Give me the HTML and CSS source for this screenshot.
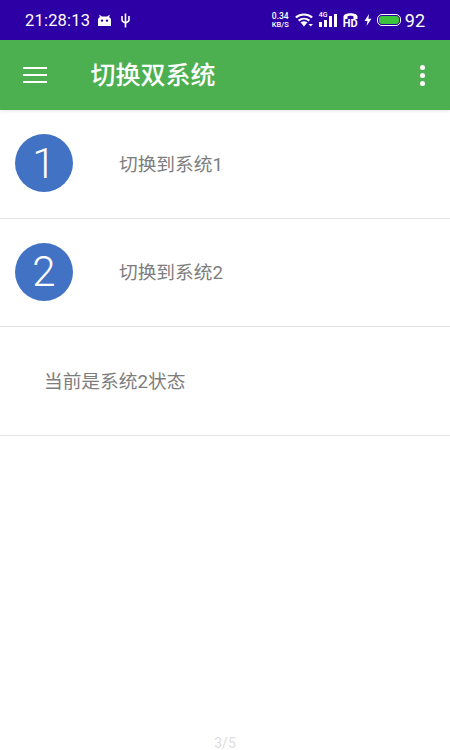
FILE: index.html
```html
<!DOCTYPE html>
<html lang="zh-CN">
<head>
    <meta charset="UTF-8">
    <meta name="viewport" content="width=device-width, initial-scale=1.0">
    <title>切换双系统</title>
    <link rel="stylesheet" href="styles.css">
</head>
<body>
    <div class="page">
        <div class="status-bar">
            <div class="status-left">
                <span class="clock">21:28:13</span>
                <svg class="icon-bot" viewBox="0 0 13 11"><path d="M1.8 0 L3.8 1.6 H9.2 L11.2 0 L12 0.8 L10.8 2 C12.2 2.6 13 3.6 13 5 V11 H0 V5 C0 3.6 0.8 2.6 2.2 2 L1 0.8 Z" fill="#fff"/><circle cx="4" cy="5.6" r="1.2" fill="#2c00a5"/><circle cx="9" cy="5.6" r="1.2" fill="#2c00a5"/></svg>
                <svg class="icon-usb" viewBox="0 0 9 15"><path d="M4.5 0.5 V14.5 M1 3 V7 C1 8.6 2.6 9.2 4.5 10 C6.4 9.2 8 8.6 8 7 V3" fill="none" stroke="#fff" stroke-width="1.6"/></svg>
            </div>
            <div class="status-right">
                <span class="net-speed"><span class="speed-value">0.34</span><span class="speed-unit">KB/S</span></span>
                <svg class="icon-wifi" viewBox="0 0 18 14"><path d="M0.8 4.5 C5.5 0.4 12.5 0.4 17.2 4.5 M3.6 7.6 C6.8 5 11.2 5 14.4 7.6" fill="none" stroke="#fff" stroke-width="2"/><path d="M5.5 9.3 C7.5 8 10.5 8 12.5 9.3 L9 13.5 Z" fill="#fff"/><path d="M13.5 11 H18 L15.7 13.5 Z" fill="#fff"/></svg>
                <span class="signal">
                    <span class="signal-label">4G</span>
                    <span class="bar bar-1"></span>
                    <span class="bar bar-2"></span>
                    <span class="bar bar-3"></span>
                    <span class="bar bar-4"></span>
                </span>
                <span class="hd-call">
                    <svg class="icon-phone" viewBox="0 0 15 6"><path d="M0.5 6 V3.5 C0.5 -1 14.5 -1 14.5 3.5 V6 H10.5 V3.8 C10.5 2.4 4.5 2.4 4.5 3.8 V6 Z" fill="#fff"/></svg>
                    <span class="hd-label">HD</span>
                </span>
                <svg class="icon-bolt" viewBox="0 0 8 12"><path d="M5 0 L0.5 7 H3.5 L2.5 12 L7.5 4.8 H4.4 Z" fill="#fff"/></svg>
                <span class="battery"><span class="battery-level"></span></span>
                <span class="battery-text">92</span>
            </div>
        </div>

        <div class="toolbar">
            <div class="menu-icon">
                <span></span>
                <span></span>
                <span></span>
            </div>
            <h1 class="title">切换双系统</h1>
            <div class="more-icon">
                <span></span>
                <span></span>
                <span></span>
            </div>
        </div>

        <div class="list">
            <div class="row">
                <div class="badge">1</div>
                <div class="row-text">切换到系统1</div>
            </div>
            <div class="row">
                <div class="badge">2</div>
                <div class="row-text">切换到系统2</div>
            </div>
            <div class="row row-state">
                <div class="row-text">当前是系统2状态</div>
            </div>
        </div>

        <div class="pager">3/5</div>
    </div>
</body>
</html>
```

FILE: styles.css
```css
* {
    box-sizing: border-box;
}
html, body {
    margin: 0;
    padding: 0;
}
body {
    font-family: "Roboto", "Noto Sans CJK SC", sans-serif;
    background: #fff;
}
.page {
    width: 450px;
    height: 750px;
    display: flex;
    flex-direction: column;
    overflow: hidden;
}
.status-bar {
    height: 40px;
    background: #2c00a5;
    color: #fff;
    display: flex;
    align-items: center;
    justify-content: space-between;
    padding: 0 25px 0 25px;
}
.status-left {
    display: flex;
    align-items: center;
}
.clock {
    font-size: 16.5px;
    letter-spacing: 0.2px;
}
.icon-bot {
    width: 13px;
    height: 11px;
    margin-left: 8px;
}
.icon-usb {
    width: 9px;
    height: 15px;
    margin-left: 10px;
}
.status-right {
    display: flex;
    align-items: center;
}
.net-speed {
    display: flex;
    flex-direction: column;
    align-items: center;
    width: 17px;
    font-weight: 500;
}
.speed-value {
    font-size: 8.5px;
    line-height: 9px;
}
.speed-unit {
    font-size: 7.5px;
    line-height: 8px;
}
.icon-wifi {
    width: 18px;
    height: 14px;
    margin-left: 6px;
}
.signal {
    position: relative;
    display: flex;
    align-items: flex-end;
    gap: 2px;
    height: 14px;
    margin-left: 6px;
}
.signal-label {
    position: absolute;
    left: 0;
    top: -1px;
    font-size: 7px;
    line-height: 7px;
    font-weight: 500;
}
.bar {
    width: 3px;
    background: #fff;
}
.bar-1 { height: 5px; }
.bar-2 { height: 7px; }
.bar-3 { height: 11px; }
.bar-4 { height: 13px; }
.hd-call {
    display: flex;
    flex-direction: column;
    align-items: center;
    width: 15px;
    margin-left: 6px;
}
.icon-phone {
    width: 15px;
    height: 6px;
}
.hd-label {
    font-size: 11px;
    line-height: 9px;
    font-weight: 700;
}
.icon-bolt {
    width: 8px;
    height: 12px;
    margin-left: 6px;
}
.battery {
    width: 24px;
    height: 12px;
    margin-left: 5px;
    padding: 1px;
    border: 1px solid #fff;
    border-radius: 5px;
}
.battery-level {
    display: block;
    height: 100%;
    background: #3cc43c;
    border-radius: 3px;
}
.battery-text {
    font-size: 18px;
    margin-left: 4px;
}
.toolbar {
    height: 70px;
    background: #4caf50;
    color: #fff;
    display: flex;
    align-items: center;
    padding: 0 25px 0 23px;
    box-shadow: 0 1px 3px rgba(0, 0, 0, 0.1);
}
.menu-icon {
    display: flex;
    flex-direction: column;
    gap: 4.5px;
    width: 24px;
}
.menu-icon span {
    height: 2.5px;
    background: #fff;
}
.title {
    flex: 1;
    margin: 0 0 0 43.5px;
    font-size: 25px;
    font-weight: 500;
    line-height: 1;
}
.more-icon {
    display: flex;
    flex-direction: column;
    gap: 3px;
}
.more-icon span {
    width: 5px;
    height: 5px;
    border-radius: 50%;
    background: #fff;
}
.row {
    height: 108.5px;
    display: flex;
    align-items: center;
    padding-left: 15px;
    padding-bottom: 1px;
    border-bottom: 1px solid #e4e4e4;
}
.badge {
    width: 58px;
    height: 58px;
    border-radius: 50%;
    background: #4272c4;
    color: #fff;
    display: flex;
    align-items: center;
    justify-content: center;
    font-size: 42px;
    font-weight: 300;
}
.row-text {
    margin-left: 46px;
    margin-bottom: 2px;
    font-size: 18.7px;
    color: #7d7d7d;
}
.row-state {
    padding-left: 44px;
}
.row-state .row-text {
    margin-left: 0;
}
.pager {
    margin-top: auto;
    text-align: center;
    font-size: 14px;
    line-height: 14px;
    color: #ddd;
}
```
